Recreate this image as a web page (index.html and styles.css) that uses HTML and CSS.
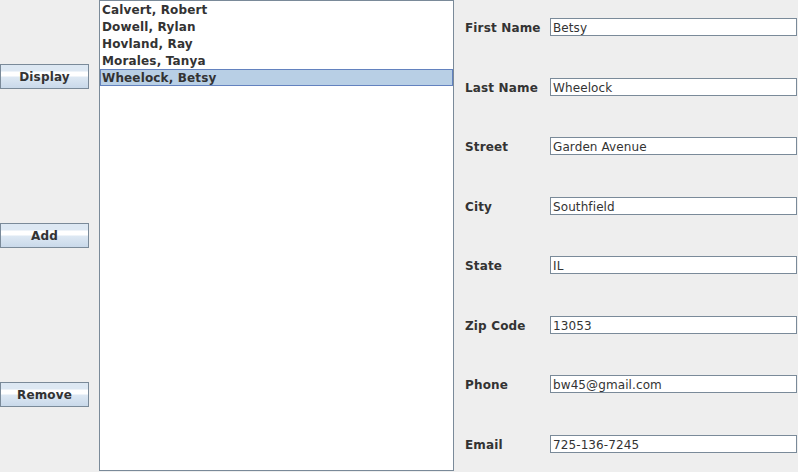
FILE: index.html
```html
<!DOCTYPE html>
<html>
<head>
<meta charset="utf-8">
<link rel="stylesheet" href="styles.css">
</head>
<body>
<div class="app">
  <div class="buttons">
    <button class="btn">Display</button>
    <button class="btn">Add</button>
    <button class="btn">Remove</button>
  </div>
  <div class="list">
    <div class="item">Calvert, Robert</div>
    <div class="item">Dowell, Rylan</div>
    <div class="item">Hovland, Ray</div>
    <div class="item">Morales, Tanya</div>
    <div class="item selected">Wheelock, Betsy</div>
  </div>
  <div class="form">
    <div class="row"><span class="label">First Name</span><span class="field">Betsy</span></div>
    <div class="row"><span class="label">Last Name</span><span class="field">Wheelock</span></div>
    <div class="row"><span class="label">Street</span><span class="field">Garden Avenue</span></div>
    <div class="row"><span class="label">City</span><span class="field">Southfield</span></div>
    <div class="row"><span class="label">State</span><span class="field">IL</span></div>
    <div class="row"><span class="label">Zip Code</span><span class="field">13053</span></div>
    <div class="row"><span class="label">Phone</span><span class="field">bw45@gmail.com</span></div>
    <div class="row"><span class="label">Email</span><span class="field">725-136-7245</span></div>
  </div>
</div>
</body>
</html>
```
FILE: styles.css
```css
html, body {
  margin: 0;
  padding: 0;
  background: #eeeeee;
  width: 798px;
  height: 472px;
  overflow: hidden;
  font-family: "DejaVu Sans", sans-serif;
  color: #333333;
}
.app {
  display: flex;
  width: 798px;
  height: 472px;
}
.buttons {
  width: 99px;
  flex: none;
  display: flex;
  flex-direction: column;
  align-items: flex-start;
  padding-top: 64px;
  gap: 134px;
  box-sizing: border-box;
}
.btn {
  width: 89px;
  height: 25px;
  margin: 0;
  padding: 1px 0 0 0;
  border: 1px solid #7a8a99;
  background: linear-gradient(to bottom, #dde8f3 0px, #dde8f3 6px, #ffffff 7px, #ffffff 11px, #dde8f3 12px, #c9d9ea 23px);
  font-family: "DejaVu Sans", sans-serif;
  font-weight: bold;
  font-size: 12px;
  letter-spacing: 0.15px;
  color: #333333;
  line-height: 22px;
  text-align: center;
}
.list {
  width: 355px;
  height: 471px;
  flex: none;
  box-sizing: border-box;
  border: 1px solid #7a8a99;
  background: #ffffff;
  padding-top: 1px;
}
.item {
  height: 17px;
  line-height: 17px;
  font-size: 12px;
  letter-spacing: 0.15px;
  font-weight: bold;
  padding-left: 2px;
  box-sizing: border-box;
  white-space: nowrap;
}
.selected {
  background: #b8cfe5;
  border: 1px solid #6382bf;
  line-height: 15px;
  padding-left: 1px;
  margin-top: -1px;
  padding-top: 1px;
  height: 17px;
}
.form {
  flex: 1;
  display: grid;
  grid-template-rows: repeat(8, 59.57px);
  align-content: start;
  padding-left: 11px;
}
.row {
  display: flex;
  align-items: flex-start;
  padding-top: 18px;
  box-sizing: border-box;
}
.label {
  width: 85px;
  flex: none;
  font-size: 12px;
  letter-spacing: 0.15px;
  font-weight: bold;
  line-height: 18px;
  padding-top: 1px;
}
.field {
  width: 247px;
  height: 18px;
  box-sizing: border-box;
  border: 1px solid #7a8a99;
  background: #ffffff;
  font-size: 12px;
  letter-spacing: 0.1px;
  line-height: 16px;
  padding: 1px 0 0 2px;
  white-space: nowrap;
}
```
